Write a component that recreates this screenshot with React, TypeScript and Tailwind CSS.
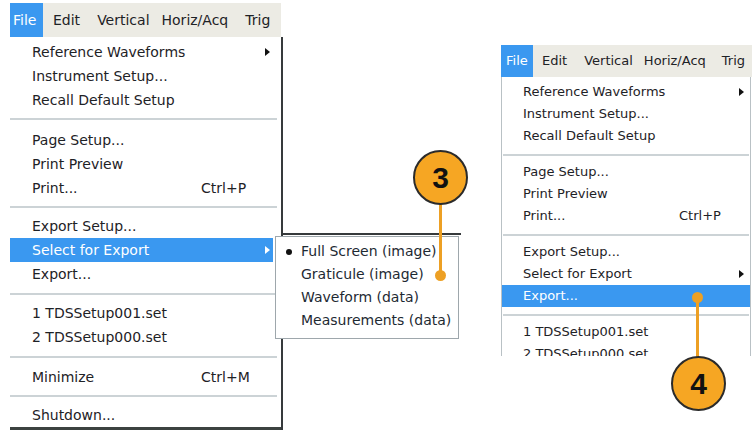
import React from "react";

type Item =
  | { kind: "row"; label: string; shortcut?: string; arrow?: boolean; active?: boolean }
  | { kind: "sep"; h: string; pt: string };

const leftItems: Item[] = [
  { kind: "row", label: "Reference Waveforms", arrow: true },
  { kind: "row", label: "Instrument Setup..." },
  { kind: "row", label: "Recall Default Setup" },
  { kind: "sep", h: "h-[16px]", pt: "pt-[6px]" },
  { kind: "row", label: "Page Setup..." },
  { kind: "row", label: "Print Preview" },
  { kind: "row", label: "Print...", shortcut: "Ctrl+P" },
  { kind: "sep", h: "h-[14px]", pt: "pt-[6px]" },
  { kind: "row", label: "Export Setup..." },
  { kind: "row", label: "Select for Export", arrow: true, active: true },
  { kind: "row", label: "Export..." },
  { kind: "sep", h: "h-[15px]", pt: "pt-[7px]" },
  { kind: "row", label: "1 TDSSetup001.set" },
  { kind: "row", label: "2 TDSSetup000.set" },
  { kind: "sep", h: "h-[16px]", pt: "pt-[7px]" },
  { kind: "row", label: "Minimize", shortcut: "Ctrl+M" },
  { kind: "sep", h: "h-[14px]", pt: "pt-[6px]" },
  { kind: "row", label: "Shutdown..." },
];

const rightItems: Item[] = [
  { kind: "row", label: "Reference Waveforms", arrow: true },
  { kind: "row", label: "Instrument Setup..." },
  { kind: "row", label: "Recall Default Setup" },
  { kind: "sep", h: "h-[14px]", pt: "pt-[7px]" },
  { kind: "row", label: "Page Setup..." },
  { kind: "row", label: "Print Preview" },
  { kind: "row", label: "Print...", shortcut: "Ctrl+P" },
  { kind: "sep", h: "h-[14px]", pt: "pt-[7px]" },
  { kind: "row", label: "Export Setup..." },
  { kind: "row", label: "Select for Export", arrow: true },
  { kind: "row", label: "Export...", active: true },
  { kind: "sep", h: "h-[14px]", pt: "pt-[7px]" },
  { kind: "row", label: "1 TDSSetup001.set" },
  { kind: "row", label: "2 TDSSetup000.set" },
];

function Arrow({ white }: { white?: boolean }) {
  return (
    <span
      className={
        "block w-0 h-0 border-y-[4px] border-y-transparent border-l-[5px] " +
        (white ? "border-l-white" : "border-l-[#111]")
      }
    />
  );
}

function LeftMenu() {
  return (
    <div className="w-[273px] mt-[3px] flex flex-col text-[14px] text-[#1e2226]">
      <div className="h-[34px] w-[271px] bg-[#ecebe4] flex items-center">
        <div className="h-full w-[33px] bg-[#3a98f0] text-white flex items-center pl-[3px]">File</div>
        <span className="ml-[10px]">Edit</span>
        <span className="ml-[17px]">Vertical</span>
        <span className="ml-[12px]">Horiz/Acq</span>
        <span className="ml-[17px]">Trig</span>
      </div>
      <div className="bg-white border-r-2 border-r-[#363a3c] pt-[3px] h-[393px] flex flex-col">
        {leftItems.map((it, i) =>
          it.kind === "sep" ? (
            <div key={i} className={it.h + " " + it.pt + " shrink-0 mr-[4px]"}>
              <div className="h-[2px] bg-[#ccd3d6]" />
            </div>
          ) : (
            <div
              key={i}
              className={
                "h-[24px] shrink-0 mr-[8px] pl-[22px] flex items-center " +
                (it.active ? "bg-[#3a98f0] text-white" : "")
              }
            >
              <span className="w-[169px] whitespace-nowrap">{it.label}</span>
              {it.shortcut && <span className="whitespace-nowrap">{it.shortcut}</span>}
              {it.arrow && (
                <span className="ml-auto mr-[3px]">
                  <Arrow white={it.active} />
                </span>
              )}
            </div>
          )
        )}
        <div className="mt-auto h-[3px] shrink-0 bg-[#3c4240]" />
      </div>
    </div>
  );
}

function RightMenu() {
  return (
    <div className="w-[251px] ml-[218px] mt-[45px] flex flex-col text-[13px] text-[#1e2226]">
      <div className="h-[32px] bg-[#ecebe4] flex items-center whitespace-nowrap overflow-hidden">
        <div className="h-full w-[32px] shrink-0 bg-[#3a98f0] text-white flex items-center pl-[5px]">File</div>
        <span className="ml-[9px]">Edit</span>
        <span className="ml-[17px]">Vertical</span>
        <span className="ml-[11px]">Horiz/Acq</span>
        <span className="ml-[16px]">Trig</span>
      </div>
      <div className="w-[250px] h-[279px] overflow-hidden bg-white border-x border-x-[#b9c1c5] pt-[4px] flex flex-col">
        {rightItems.map((it, i) =>
          it.kind === "sep" ? (
            <div key={i} className={it.h + " " + it.pt + " shrink-0 mx-[1px]"}>
              <div className="h-[2px] bg-[#ccd3d6]" />
            </div>
          ) : (
            <div
              key={i}
              className={
                "h-[22px] shrink-0 pl-[21px] flex items-center " +
                (it.active ? "bg-[#3a98f0] text-white" : "")
              }
            >
              <span className="w-[156px] whitespace-nowrap">{it.label}</span>
              {it.shortcut && <span className="whitespace-nowrap">{it.shortcut}</span>}
              {it.arrow && (
                <span className="ml-auto mr-[6px]">
                  <Arrow white={it.active} />
                </span>
              )}
            </div>
          )
        )}
      </div>
    </div>
  );
}

function SubMenu() {
  const rows = ["Full Screen (image)", "Graticule (image)", "Waveform (data)", "Measurements (data)"];
  return (
    <div className="absolute left-[275px] top-[236px] w-[184px] h-[103px] bg-white border border-[#9ea7ac] pt-[3px] flex flex-col text-[14px] text-[#1e2a33]">
      {rows.map((r, i) => (
        <div key={r} className="h-[23px] flex items-center">
          <span className="w-[25px] flex justify-center">
            {i === 0 && <span className="block w-[6px] h-[6px] rounded-full bg-[#111]" />}
          </span>
          <span className="whitespace-nowrap">{r}</span>
        </div>
      ))}
    </div>
  );
}

function Callout({
  n,
  dotClass,
  lineClass,
  circleClass,
}: {
  n: string;
  dotClass: string;
  lineClass: string;
  circleClass: string;
}) {
  return (
    <>
      <div className={"absolute w-[3px] bg-[#eda024] " + lineClass} />
      <div className={"absolute w-[11px] h-[11px] rounded-full bg-[#eda024] " + dotClass} />
      <div
        className={
          "absolute w-[55px] h-[55px] rounded-full bg-[#f6a623] border-2 border-[#2b2b2b] flex items-center justify-center " +
          circleClass
        }
      >
        <span
          className="text-[30px] font-bold text-[#111] leading-none"
          style={{ fontFamily: '"Liberation Sans", Arial, sans-serif' }}
        >
          {n}
        </span>
      </div>
    </>
  );
}

export default function App() {
  return (
    <div
      className="relative w-[752px] h-[430px] bg-white overflow-hidden"
      style={{ fontFamily: '"DejaVu Sans", Verdana, sans-serif' }}
    >
      <div className="flex items-start pl-[10px]">
        <LeftMenu />
        <RightMenu />
      </div>
      {/* edge of the window behind the left menu */}
      <div className="absolute left-[281px] top-[233px] w-[180px] h-[2px] bg-[#363a3c]" />
      <SubMenu />
      <Callout
        n="3"
        circleClass="left-[413px] top-[150px]"
        lineClass="left-[439px] top-[204px] h-[72px]"
        dotClass="left-[435px] top-[270px]"
      />
      <Callout
        n="4"
        circleClass="left-[671px] top-[356px]"
        lineClass="left-[696px] top-[297px] h-[61px]"
        dotClass="left-[692px] top-[292px]"
      />
    </div>
  );
}
